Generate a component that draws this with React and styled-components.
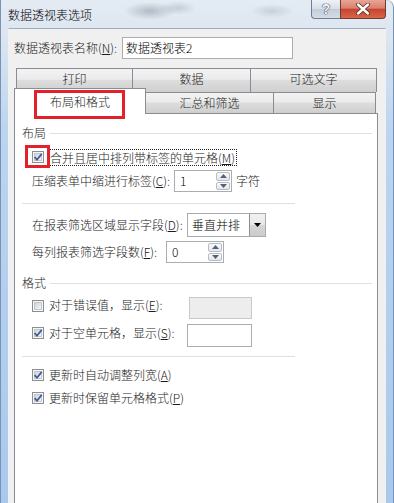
import React from 'react';
import styled, { createGlobalStyle } from 'styled-components';

const GlobalStyle = createGlobalStyle`
	html, body {
		margin: 0;
		padding: 0;
		background: #fff;
	}
	body {
		font-family: "Noto Sans CJK SC", "Microsoft YaHei", sans-serif;
		font-size: 12px;
		font-weight: 300;
		color: #1b1b1b;
	}
	u {
		text-underline-offset: 1px;
	}
`;

const Check = ({ checked }) => (
	<CheckBox width="12" height="12" viewBox="0 0 12 12">
		<defs>
			<linearGradient id="cbFill" x1="0" y1="0" x2="1" y2="1">
				<stop offset="0" stopColor="#cbd0d8" />
				<stop offset="1" stopColor="#f7f8fa" />
			</linearGradient>
		</defs>
		<rect x="0.5" y="0.5" width="11" height="11" fill="#f6f6f6" stroke="#8e8f8f" />
		<rect x="2.5" y="2.5" width="7" height="7" fill="url(#cbFill)" stroke="#c3c8d0" />
		{checked && (
			<path d="M2.6 6.1 L5 8.7 L9.7 2.9" fill="none" stroke="#44589a" strokeWidth="1.7" />
		)}
	</CheckBox>
);

const Arrow = ({ up }) => (
	<svg width="7" height="4" viewBox="0 0 7 4">
		<path d={up ? 'M0 4 L3.5 0 L7 4 Z' : 'M0 0 L3.5 4 L7 0 Z'} fill="#51627f" />
	</svg>
);

const Spinner = ({ value, $w }) => (
	<SpinBox $w={$w}>
		<SpinValue>{value}</SpinValue>
		<SpinButtons>
			<SpinButton><Arrow up /></SpinButton>
			<SpinButton><Arrow /></SpinButton>
		</SpinButtons>
	</SpinBox>
);

const App = () => (
	<>
		<GlobalStyle />
		<Window>
			<TitleBar>
				<Title>数据透视表选项</Title>
				<Caption>
					<HelpButton>?</HelpButton>
					<CloseButton>
						<svg width="16" height="12" viewBox="0 0 16 12">
							<path d="M3 1.5 L13 10.5 M13 1.5 L3 10.5" stroke="#5a2a24" strokeWidth="4" strokeLinecap="round" />
							<path d="M3 1.5 L13 10.5 M13 1.5 L3 10.5" stroke="#fff" strokeWidth="2.4" strokeLinecap="round" />
						</svg>
					</CloseButton>
				</Caption>
			</TitleBar>
			<Client>
				<NameRow>
					<Label $w={108}>数据透视表名称(<u>N</u>):</Label>
					<TextInput $w={171}>数据透视表2</TextInput>
				</NameRow>
				<Tabs>
					<UpperRow>
						<Tab $w={117}>打印</Tab>
						<Tab $w={119}>数据</Tab>
						<Tab $w={127}>可选文字</Tab>
					</UpperRow>
					<LowerRow>
						<ActiveTab>
							布局和格式
							<Marker $left={19} $top={1} $w={91} $h={29} />
						</ActiveTab>
						<Tab $w={129} $low>汇总和筛选</Tab>
						<Tab $w={103} $low>显示</Tab>
					</LowerRow>
				</Tabs>
				<Panel>
					<Body>
						<GroupHeader>
							布局
							<GroupLine />
						</GroupHeader>
						<CheckRow $mt={5}>
							<Check checked />
							<FocusLabel>合并且居中排列带标签的单元格(<u>M</u>)</FocusLabel>
							<Marker $left={3} $top={-1} $w={25} $h={23} />
						</CheckRow>
						<FieldRow $mt={2}>
							<Label $w={142}>压缩表单中缩进行标签(<u>C</u>):</Label>
							<Spinner value="1" $w={58} />
							<Unit>字符</Unit>
						</FieldRow>
						<Separator $mt={11} />
						<FieldRow $mt={9}>
							<Label $w={155}>在报表筛选区域显示字段(<u>D</u>):</Label>
							<Select>
								<SelectValue>垂直并排</SelectValue>
								<DropButton>
									<svg width="7" height="4" viewBox="0 0 7 4">
										<path d="M0 0 L3.5 4 L7 0 Z" fill="#000" />
									</svg>
								</DropButton>
							</Select>
						</FieldRow>
						<FieldRow $mt={4}>
							<Label $w={134}>每列报表筛选字段数(<u>F</u>):</Label>
							<Spinner value="0" $w={58} />
						</FieldRow>
						<GroupHeader $mt={12}>
							格式
							<GroupLine />
						</GroupHeader>
						<OptionRow $mt={6}>
							<Check />
							<OptionLabel $w={140}>对于错误值，显示(<u>E</u>):</OptionLabel>
							<TextInput $w={63} $disabled />
						</OptionRow>
						<OptionRow $mt={5}>
							<Check checked />
							<OptionLabel $w={138} $mt={1}>对于空单元格，显示(<u>S</u>):</OptionLabel>
							<TextInput $w={65} $h={23} />
						</OptionRow>
						<Separator $mt={10} />
						<CheckRow $mt={10} $h={16}>
							<Check checked />
							<PlainLabel>更新时自动调整列宽(<u>A</u>)</PlainLabel>
						</CheckRow>
						<CheckRow $mt={7} $h={16}>
							<Check checked />
							<PlainLabel>更新时保留单元格格式(<u>P</u>)</PlainLabel>
						</CheckRow>
					</Body>
				</Panel>
			</Client>
		</Window>
	</>
);

export default App;

const Window = styled.div`
	width: 394px;
	height: 503px;
	box-sizing: border-box;
	padding: 0 8px;
	display: flex;
	flex-direction: column;
	overflow: hidden;
	border-top-right-radius: 7px;
	box-shadow: inset 1px 0 #7893b8, inset -1px 0 #7893b8;
	background:
		radial-gradient(ellipse 26px 9px at 150px 11px, rgba(80, 92, 106, 0.32), transparent),
		radial-gradient(ellipse 18px 7px at 178px 8px, rgba(80, 92, 106, 0.2), transparent),
		radial-gradient(ellipse 22px 7px at 272px 11px, rgba(80, 92, 106, 0.18), transparent),
		linear-gradient(to bottom, #e4ebf3 0px, #dbe5f0 40px, #bcd4ee 130px, #a9c9ec 100%);
`;

const TitleBar = styled.div`
	height: 28px;
	display: flex;
	align-items: flex-start;
`;

const Title = styled.div`
	padding-top: 7px;
	line-height: 16px;
	color: #000;
`;

const Caption = styled.div`
	margin-left: auto;
	display: flex;
`;

const HelpButton = styled.div`
	width: 29px;
	height: 19px;
	box-sizing: border-box;
	border: 1px solid #6f7f95;
	border-top: none;
	border-right: none;
	border-bottom-left-radius: 4px;
	background: linear-gradient(to bottom, #eef2f7 0%, #d6dee8 50%, #c3cdd9 51%, #d4dce6 100%);
	display: flex;
	align-items: center;
	justify-content: center;
	font-family: "Liberation Sans", sans-serif;
	font-weight: bold;
	font-size: 14px;
	color: #f4f6f9;
	text-shadow: 0 0 1px #39495d, 0 0 1px #39495d, 0 0 1px #39495d;
`;

const CloseButton = styled.div`
	width: 46px;
	height: 19px;
	box-sizing: border-box;
	border: 1px solid #6d3a34;
	border-top: none;
	border-bottom-right-radius: 4px;
	background: linear-gradient(to bottom, #e8a595 0%, #d9806d 45%, #c8442e 52%, #d8654a 100%);
	display: flex;
	align-items: center;
	justify-content: center;
`;

const Client = styled.div`
	flex: 1;
	min-height: 0;
	background: #f0f0f0;
	border-top: 1px solid #9fadbf;
	border-left: 1px solid #eef2f7;
	border-right: 1px solid #eef2f7;
	padding: 8px 7px 0 5px;
	display: flex;
	flex-direction: column;
`;

const NameRow = styled.div`
	height: 22px;
	display: flex;
	align-items: center;
`;

const Label = styled.div`
	width: ${p => p.$w}px;
	flex: none;
	white-space: nowrap;
	line-height: 16px;
`;

const TextInput = styled.div`
	width: ${p => p.$w}px;
	height: ${p => p.$h || 22}px;
	box-sizing: border-box;
	flex: none;
	border: 1px solid ${p => (p.$disabled ? '#c9c9c9' : '#abadb3')};
	background: ${p => (p.$disabled ? '#ededed' : '#fff')};
	padding: 2px 3px;
	line-height: 16px;
	color: #000;
`;

const Tabs = styled.div`
	margin-top: 9px;
	display: flex;
	flex-direction: column;
`;

const UpperRow = styled.div`
	height: 24px;
	display: flex;
	padding-left: 2px;
`;

const LowerRow = styled.div`
	height: 25px;
	margin-top: -4px;
	display: flex;
	align-items: flex-end;
`;

const Tab = styled.div`
	width: ${p => p.$w}px;
	height: ${p => (p.$low ? 21 : 24)}px;
	box-sizing: border-box;
	flex: none;
	border: 1px solid #898c95;
	border-bottom: none;
	padding-top: 2px;
	line-height: 16px;
	text-align: center;
	background: linear-gradient(to bottom, #f3f3f3 0%, #ebebeb 45%, #dddddd 50%, #cfcfcf 100%);
	& + & {
		margin-left: -1px;
	}
`;

const ActiveTab = styled.div`
	position: relative;
	z-index: 2;
	width: 132px;
	height: 26px;
	margin-bottom: -1px;
	box-sizing: border-box;
	flex: none;
	border: 1px solid #898c95;
	border-bottom: none;
	background: #fff;
	padding-top: 5px;
	line-height: 16px;
	text-align: center;
	& + ${Tab} {
		margin-left: -1px;
	}
`;

const Marker = styled.div`
	position: absolute;
	z-index: 3;
	left: ${p => p.$left}px;
	top: ${p => p.$top}px;
	width: ${p => p.$w}px;
	height: ${p => p.$h}px;
	box-sizing: border-box;
	border: 3px solid #e2212b;
	pointer-events: none;
`;

const Panel = styled.div`
	flex: 1;
	background: #fff;
	border: 1px solid #898c95;
	border-bottom: none;
`;

const Body = styled.div`
	padding: 11px 5px 0 7px;
	display: flex;
	flex-direction: column;
`;

const GroupHeader = styled.div`
	height: 16px;
	margin-top: ${p => p.$mt || 0}px;
	display: flex;
	align-items: center;
	line-height: 16px;
`;

const GroupLine = styled.div`
	flex: 1;
	height: 1px;
	margin-left: 4px;
	background: #dcdfe4;
`;

const CheckRow = styled.div`
	position: relative;
	height: ${p => p.$h || 22}px;
	margin-top: ${p => p.$mt || 0}px;
	padding-left: 10px;
	display: flex;
	align-items: center;
`;

const CheckBox = styled.svg`
	flex: none;
	display: block;
`;

const FocusLabel = styled.div`
	margin-left: 5px;
	border: 1px dotted #222;
	padding: 0 1px 0 0;
	line-height: 15px;
	white-space: nowrap;
`;

const PlainLabel = styled.div`
	margin-left: 5px;
	line-height: 16px;
	white-space: nowrap;
`;

const FieldRow = styled.div`
	margin-top: ${p => p.$mt || 0}px;
	padding-left: 10px;
	display: flex;
	align-items: center;
`;

const Unit = styled.div`
	margin-left: 4px;
	line-height: 16px;
`;

const SpinBox = styled.div`
	width: ${p => p.$w}px;
	height: 22px;
	box-sizing: border-box;
	flex: none;
	border: 1px solid #abadb3;
	display: flex;
	background: #fff;
`;

const SpinValue = styled.div`
	flex: 1;
	padding: 2px 0 0 5px;
	line-height: 16px;
	color: #000;
`;

const SpinButtons = styled.div`
	width: 14px;
	margin: 1px;
	display: flex;
	flex-direction: column;
	gap: 1px;
`;

const SpinButton = styled.div`
	flex: 1;
	box-sizing: border-box;
	border: 1px solid #b9bcc2;
	border-radius: 2px;
	background: linear-gradient(to bottom, #fafafa, #e4e6ea);
	display: flex;
	align-items: center;
	justify-content: center;
`;

const Select = styled.div`
	width: 79px;
	height: 24px;
	box-sizing: border-box;
	flex: none;
	border: 1px solid #a9abb1;
	background: #fff;
	display: flex;
`;

const SelectValue = styled.div`
	flex: 1;
	padding: 3px 0 0 4px;
	line-height: 16px;
	color: #000;
`;

const DropButton = styled.div`
	width: 16px;
	box-sizing: border-box;
	border-left: 1px solid #8d8f94;
	background: linear-gradient(to bottom, #f2f2f2 0%, #e6e6e6 50%, #d6d6d6 51%, #cbcbcb 100%);
	display: flex;
	align-items: center;
	justify-content: center;
`;

const OptionRow = styled.div`
	height: 22px;
	margin-top: ${p => p.$mt || 0}px;
	padding-left: 10px;
	display: flex;
	align-items: flex-start;
	& > svg {
		margin-top: 3px;
	}
`;

const OptionLabel = styled.div`
	width: ${p => p.$w}px;
	flex: none;
	margin-left: 5px;
	margin-top: ${p => p.$mt || 0}px;
	line-height: 16px;
	white-space: nowrap;
`;

const Separator = styled.div`
	width: 273px;
	height: 1px;
	margin-top: ${p => p.$mt || 0}px;
	background: #dcdfe4;
`;
